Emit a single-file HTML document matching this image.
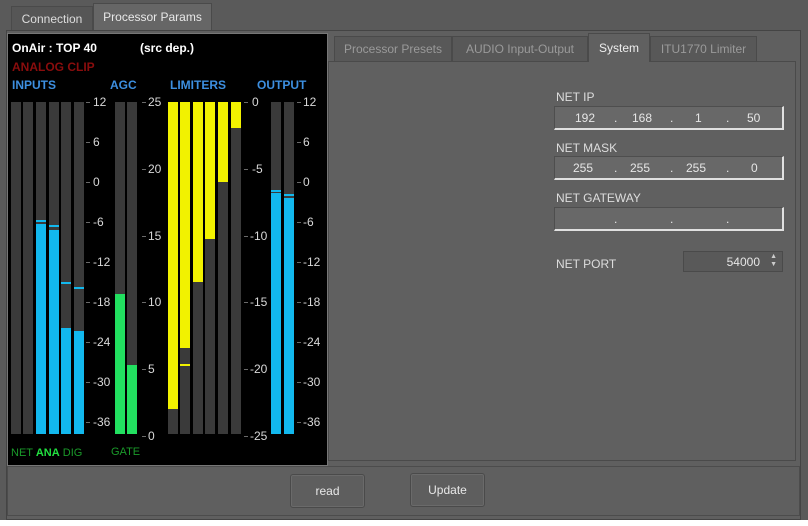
<!DOCTYPE html>
<html><head><meta charset="utf-8"><style>
*{margin:0;padding:0;box-sizing:border-box}
body{width:808px;height:526px;background:#fff;position:relative;overflow:hidden;font-family:"Liberation Sans",sans-serif;font-size:12px;color:#ddd}
.a{position:absolute}
.bar{position:absolute;background:#3a3a3a;top:102px;height:332px;width:10px}
.f{position:absolute;left:0;right:0;bottom:0}
.c{position:absolute;left:0;right:0;height:2px}
.lbl{position:absolute;font-size:12px;color:#d8d8d8;line-height:12px}
.tk{position:absolute;height:1px;width:4px;background:#6a6a6a}
.fld{position:absolute;left:554px;width:230px;height:24px;background:#686868;border:1px solid #4e4e4e;border-right:2px solid #e0e0e0;border-bottom:2px solid #e0e0e0;font-size:12px;color:#e6e6e6}
.fld span{position:absolute;top:4px}
.tab{position:absolute;border:1px solid #4a4a4a;border-bottom:none;color:#9a9a9a;font-size:12px;text-align:center}
.btn{position:absolute;width:75px;height:34px;background:#5e5e5e;border:1px solid #4a4a4a;border-radius:3px;box-shadow:inset 0 0 0 1px #6a6a6a;color:#e8e8e8;text-align:center;line-height:32px;font-size:12px}
</style></head><body>
<div class="a" style="left:0;top:0;width:808px;height:520px;background:#5a5a5a"></div>
<div class="a" style="left:6px;top:30px;width:795px;height:490px;background:#5f5f5f;border:1px solid #444"></div>
<div class="tab" style="left:11px;top:6px;width:82px;height:24px;background:#565656;color:#ddd;line-height:24px">Connection</div>
<div class="tab" style="left:93px;top:3px;width:119px;height:27px;background:#666;color:#e8e8e8;line-height:27px">Processor Params</div>
<div class="a" style="left:7px;top:33px;width:321px;height:433px;background:#000;border:1px solid #777"></div>
<div class="a" style="left:12px;top:41px;font-weight:bold;color:#fff;font-size:12px">OnAir : TOP 40</div>
<div class="a" style="left:140px;top:41px;font-weight:bold;color:#fff;font-size:12px">(src dep.)</div>
<div class="a" style="left:12px;top:60px;font-weight:bold;color:#8a0d0d;font-size:12px">ANALOG CLIP</div>
<div class="a" style="left:12px;top:78px;font-weight:bold;color:#3d8fe0">INPUTS</div>
<div class="a" style="left:110px;top:78px;font-weight:bold;color:#3d8fe0">AGC</div>
<div class="a" style="left:170px;top:78px;font-weight:bold;color:#3d8fe0">LIMITERS</div>
<div class="a" style="left:257px;top:78px;font-weight:bold;color:#3d8fe0">OUTPUT</div>
<div class="bar" style="left:11px"></div>
<div class="bar" style="left:23px"></div>
<div class="bar" style="left:36px"><div class="f" style="top:122px;background:#12b8ee"></div><div class="c" style="top:118px;background:#12b8ee"></div></div>
<div class="bar" style="left:49px"><div class="f" style="top:128px;background:#12b8ee"></div><div class="c" style="top:123px;background:#12b8ee"></div></div>
<div class="bar" style="left:61px"><div class="f" style="top:226px;background:#12b8ee"></div><div class="c" style="top:180px;background:#12b8ee"></div></div>
<div class="bar" style="left:74px"><div class="f" style="top:229px;background:#12b8ee"></div><div class="c" style="top:185px;background:#12b8ee"></div></div>
<div class="tk" style="left:86px;top:102px"></div><div class="lbl" style="left:93px;top:96px">12</div>
<div class="tk" style="left:86px;top:142px"></div><div class="lbl" style="left:93px;top:136px">6</div>
<div class="tk" style="left:86px;top:182px"></div><div class="lbl" style="left:93px;top:176px">0</div>
<div class="tk" style="left:86px;top:222px"></div><div class="lbl" style="left:93px;top:216px">-6</div>
<div class="tk" style="left:86px;top:262px"></div><div class="lbl" style="left:93px;top:256px">-12</div>
<div class="tk" style="left:86px;top:302px"></div><div class="lbl" style="left:93px;top:296px">-18</div>
<div class="tk" style="left:86px;top:342px"></div><div class="lbl" style="left:93px;top:336px">-24</div>
<div class="tk" style="left:86px;top:382px"></div><div class="lbl" style="left:93px;top:376px">-30</div>
<div class="tk" style="left:86px;top:422px"></div><div class="lbl" style="left:93px;top:416px">-36</div>
<div class="bar" style="left:115px"><div class="f" style="top:192px;background:#22e060"></div></div>
<div class="bar" style="left:127px"><div class="f" style="top:263px;background:#22e060"></div></div>
<div class="tk" style="left:142px;top:102px"></div><div class="lbl" style="left:148px;top:96px">25</div>
<div class="tk" style="left:142px;top:169px"></div><div class="lbl" style="left:148px;top:163px">20</div>
<div class="tk" style="left:142px;top:236px"></div><div class="lbl" style="left:148px;top:230px">15</div>
<div class="tk" style="left:142px;top:302px"></div><div class="lbl" style="left:148px;top:296px">10</div>
<div class="tk" style="left:142px;top:369px"></div><div class="lbl" style="left:148px;top:363px">5</div>
<div class="tk" style="left:142px;top:436px"></div><div class="lbl" style="left:148px;top:430px">0</div>
<div class="bar" style="left:168px"><div class="a" style="left:0;right:0;top:0;height:307px;background:#f2f200"></div></div>
<div class="bar" style="left:180px"><div class="a" style="left:0;right:0;top:0;height:246px;background:#f2f200"></div><div class="c" style="top:262px;background:#f2f200"></div></div>
<div class="bar" style="left:193px"><div class="a" style="left:0;right:0;top:0;height:180px;background:#f2f200"></div></div>
<div class="bar" style="left:205px"><div class="a" style="left:0;right:0;top:0;height:137px;background:#f2f200"></div></div>
<div class="bar" style="left:218px"><div class="a" style="left:0;right:0;top:0;height:80px;background:#f2f200"></div></div>
<div class="bar" style="left:231px"><div class="a" style="left:0;right:0;top:0;height:26px;background:#f2f200"></div></div>
<div class="tk" style="left:244px;top:102px"></div><div class="lbl" style="left:252px;top:96px">0</div>
<div class="tk" style="left:244px;top:169px"></div><div class="lbl" style="left:252px;top:163px">-5</div>
<div class="tk" style="left:244px;top:236px"></div><div class="lbl" style="left:250px;top:230px">-10</div>
<div class="tk" style="left:244px;top:302px"></div><div class="lbl" style="left:250px;top:296px">-15</div>
<div class="tk" style="left:244px;top:369px"></div><div class="lbl" style="left:250px;top:363px">-20</div>
<div class="tk" style="left:244px;top:436px"></div><div class="lbl" style="left:250px;top:430px">-25</div>
<div class="bar" style="left:271px"><div class="f" style="top:91px;background:#12b8ee"></div><div class="c" style="top:88px;background:#12b8ee"></div></div>
<div class="bar" style="left:284px"><div class="f" style="top:96px;background:#12b8ee"></div><div class="c" style="top:92px;background:#12b8ee"></div></div>
<div class="tk" style="left:297px;top:102px"></div><div class="lbl" style="left:303px;top:96px">12</div>
<div class="tk" style="left:297px;top:142px"></div><div class="lbl" style="left:303px;top:136px">6</div>
<div class="tk" style="left:297px;top:182px"></div><div class="lbl" style="left:303px;top:176px">0</div>
<div class="tk" style="left:297px;top:222px"></div><div class="lbl" style="left:303px;top:216px">-6</div>
<div class="tk" style="left:297px;top:262px"></div><div class="lbl" style="left:303px;top:256px">-12</div>
<div class="tk" style="left:297px;top:302px"></div><div class="lbl" style="left:303px;top:296px">-18</div>
<div class="tk" style="left:297px;top:342px"></div><div class="lbl" style="left:303px;top:336px">-24</div>
<div class="tk" style="left:297px;top:382px"></div><div class="lbl" style="left:303px;top:376px">-30</div>
<div class="tk" style="left:297px;top:422px"></div><div class="lbl" style="left:303px;top:416px">-36</div>
<div class="a" style="left:11px;top:447px;font-size:11px;color:#1a9a2a">NET <b style="color:#22e040">ANA</b> DIG</div>
<div class="a" style="left:111px;top:446px;font-size:11px;color:#1a9a2a">GATE</div>
<div class="a" style="left:328px;top:61px;width:468px;height:400px;background:#606060;border:1px solid #4a4a4a"></div>
<div class="tab" style="left:334px;top:36px;width:118px;height:25px;background:#585858;line-height:25px">Processor Presets</div>
<div class="tab" style="left:452px;top:36px;width:136px;height:25px;background:#585858;line-height:25px">AUDIO Input-Output</div>
<div class="tab" style="left:588px;top:33px;width:62px;height:29px;background:#606060;color:#eee;line-height:28px">System</div>
<div class="tab" style="left:650px;top:36px;width:107px;height:25px;background:#585858;line-height:25px">ITU1770 Limiter</div>
<div class="a" style="left:556px;top:90px">NET IP</div>
<div class="fld" style="top:106px"><span style="left:20px">192</span><span style="left:59px">.</span><span style="left:77px">168</span><span style="left:115px">.</span><span style="left:140px">1</span><span style="left:171px">.</span><span style="left:192px">50</span></div>
<div class="a" style="left:556px;top:141px">NET MASK</div>
<div class="fld" style="top:156px"><span style="left:18px">255</span><span style="left:59px">.</span><span style="left:75px">255</span><span style="left:115px">.</span><span style="left:131px">255</span><span style="left:171px">.</span><span style="left:196px">0</span></div>
<div class="a" style="left:556px;top:191px">NET GATEWAY</div>
<div class="fld" style="top:207px"><span style="left:59px">.</span><span style="left:115px">.</span><span style="left:171px">.</span></div>
<div class="a" style="left:556px;top:257px">NET PORT</div>
<div class="a" style="left:683px;top:251px;width:100px;height:21px;background:#595959;border:1px solid #4a4a4a"><span class="a" style="right:22px;top:3px;color:#e6e6e6">54000</span><span class="a" style="right:5px;top:1px;font-size:7px;line-height:8px;color:#ccc">▲<br>▼</span></div>
<div class="a" style="left:7px;top:466px;width:793px;height:50px;border:1px solid #4c4c4c"></div>
<div class="btn" style="left:290px;top:474px">read</div>
<div class="btn" style="left:410px;top:473px">Update</div>
</body></html>
